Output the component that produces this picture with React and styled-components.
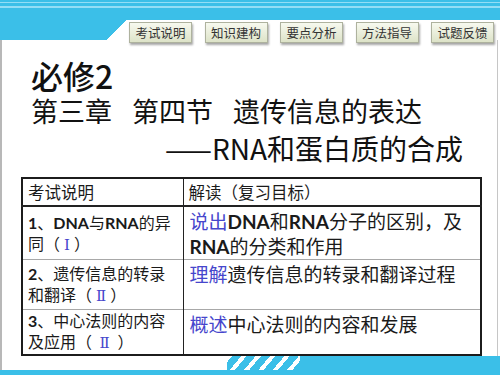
import React from 'react'
import styled, { createGlobalStyle } from 'styled-components'

const CYAN = '#3bbfe8'
const LIGHT = '#93def6'
const BLUE = '#4646cc'

const GlobalStyle = createGlobalStyle`
  html, body { margin: 0; padding: 0; background: #fff; }
  body { font-family: "Noto Sans CJK SC", sans-serif; }
`

const Slide = styled.div`
  width: 500px;
  height: 375px;
  display: flex;
  flex-direction: column;
  overflow: hidden;
  background: #fff;
`

// cyan band on top, with the step down on the left
const TopBand = styled.header`
  height: 40px;
  flex-shrink: 0;
  background:
    linear-gradient(to bottom, transparent 0 2px, ${LIGHT} 2px 3px, transparent 3px 6px, ${LIGHT} 6px 8px, transparent 8px) 0 0 / 100% 20px no-repeat,
    linear-gradient(${CYAN}, ${CYAN}) 0 0 / 100% 20px no-repeat,
    linear-gradient(${CYAN}, ${CYAN}) 0 0 / 107px 40px no-repeat,
    linear-gradient(to bottom right, ${CYAN} 50%, transparent 50%) 107px 20px / 20px 20px no-repeat;
`

const Nav = styled.nav`
  display: flex;
  gap: 12.5px;
  padding: 22px 0 0 129px;
`

const Tab = styled.div`
  width: 63px;
  height: 21px;
  box-sizing: border-box;
  display: flex;
  align-items: center;
  justify-content: center;
  font-size: 12.5px;
  color: #333;
  background: linear-gradient(#f7f9ef, #dde3c8);
  border: 1px solid #aeb29e;
  box-shadow: 1px 2px 2px rgba(0, 0, 0, 0.35);
`

const Body = styled.main`
  flex: 1;
  margin-right: 2px;
  border-left: 2px solid #b8b8b8;
  border-right: 1px solid #c6c6c6;
`

const TitleBlock = styled.div`
  padding: 16px 0 0 29px;
  color: #111;
`

const Course = styled.h1`
  margin: 0;
  font-size: 32px;
  font-weight: 500;
  line-height: 38px;
`

const Chapter = styled.h2`
  margin: 0;
  font-size: 27px;
  font-weight: 400;
  line-height: 34px;
`

const Gap = styled.span`
  display: inline-block;
  width: 20px;
`

const Subtitle = styled.h2`
  margin: 3px 0 0 163px;
  font-size: 28px;
  font-weight: 400;
  line-height: 34px;
  color: #111;
`

const Dash = styled.span`
  letter-spacing: -2px;
  margin-right: 2px;
`

const Table = styled.table`
  margin: 12px 0 0 19px;
  width: 461px;
  border-collapse: collapse;
  table-layout: fixed;
  border: 2px solid #1c1c1c;
  color: #1a1a1a;
`

const Row = styled.tr`
  height: ${p => p.$h}px;
`

const Cell = styled.td`
  padding: ${p => (p.$wide ? '2px 4px 0 6px' : '0 4px 0 5px')};
  font-size: ${p => (p.$wide ? 19 : 16)}px;
  line-height: ${p => (p.$wide ? 24 : 20)}px;
  vertical-align: ${p => (p.$wide ? 'top' : 'middle')};
  border-top: 1px solid #a8a8a8;
  border-right: ${p => (p.$wide ? 'none' : '1px solid #222')};
`

const HeadCell = styled.th`
  padding: 0 4px 0 5px;
  text-align: left;
  font-size: 16.5px;
  font-weight: 400;
  line-height: 20px;
  vertical-align: middle;
  border-bottom: 2px solid #222;
  border-right: ${p => (p.$first ? '1px solid #222' : 'none')};
`

const Latin = styled.b`
  font-family: Lato, "Liberation Sans", sans-serif;
  font-weight: 700;
`

const Key = styled.span`
  color: ${BLUE};
`

const Level = styled.span`
  color: ${BLUE};
  font-family: "DejaVu Serif", "Liberation Serif", serif;
  font-size: 15px;
  margin: 0 4px;
`

const BottomBand = styled.footer`
  height: 22px;
  flex-shrink: 0;
  background:
    linear-gradient(#b8b8b8, #b8b8b8) 0 0 / 2px 14px no-repeat,
    linear-gradient(${CYAN}, ${CYAN}) 0 14px / 100% 8px no-repeat,
    linear-gradient(${CYAN}, ${CYAN}) 300px 0 / 200px 14px no-repeat,
    repeating-linear-gradient(130deg, transparent 0 4px, ${CYAN} 4px 11px) 227px 0 / 73px 14px no-repeat;
`

const tabs = ['考试说明', '知识建构', '要点分析', '方法指导', '试题反馈']

export default function App() {
  return (
    <Slide>
      <GlobalStyle />
      <TopBand>
        <Nav>
          {tabs.map(t => (
            <Tab key={t}>{t}</Tab>
          ))}
        </Nav>
      </TopBand>
      <Body>
        <TitleBlock>
          <Course>必修2</Course>
          <Chapter>
            第三章<Gap />第四节<Gap />遗传信息的表达
          </Chapter>
        </TitleBlock>
        <Subtitle>
          <Dash>——</Dash>RNA和蛋白质的合成
        </Subtitle>
        <Table>
          <colgroup>
            <col style={{ width: 161 }} />
            <col />
          </colgroup>
          <thead>
            <Row $h={28}>
              <HeadCell $first>考试说明</HeadCell>
              <HeadCell>解读（复习目标）</HeadCell>
            </Row>
          </thead>
          <tbody>
            <Row $h={47}>
              <Cell>
                <Latin>1</Latin>、<Latin>DNA</Latin>与<Latin>RNA</Latin>的异
                <br />
                同（<Level>Ⅰ</Level>）
              </Cell>
              <Cell $wide>
                <Key>说出</Key>
                <Latin>DNA</Latin>和<Latin>RNA</Latin>分子的区别，及
                <br />
                <Latin>RNA</Latin>的分类和作用
              </Cell>
            </Row>
            <Row $h={50}>
              <Cell>
                <Latin>2</Latin>、遗传信息的转录
                <br />
                和翻译（<Level>Ⅱ</Level>）
              </Cell>
              <Cell $wide>
                <Key>理解</Key>遗传信息的转录和翻译过程
              </Cell>
            </Row>
            <Row $h={45}>
              <Cell>
                <Latin>3</Latin>、中心法则的内容
                <br />
                及应用（ <Level>Ⅱ</Level> ）
              </Cell>
              <Cell $wide>
                <Key>概述</Key>中心法则的内容和发展
              </Cell>
            </Row>
          </tbody>
        </Table>
      </Body>
      <BottomBand />
    </Slide>
  )
}
